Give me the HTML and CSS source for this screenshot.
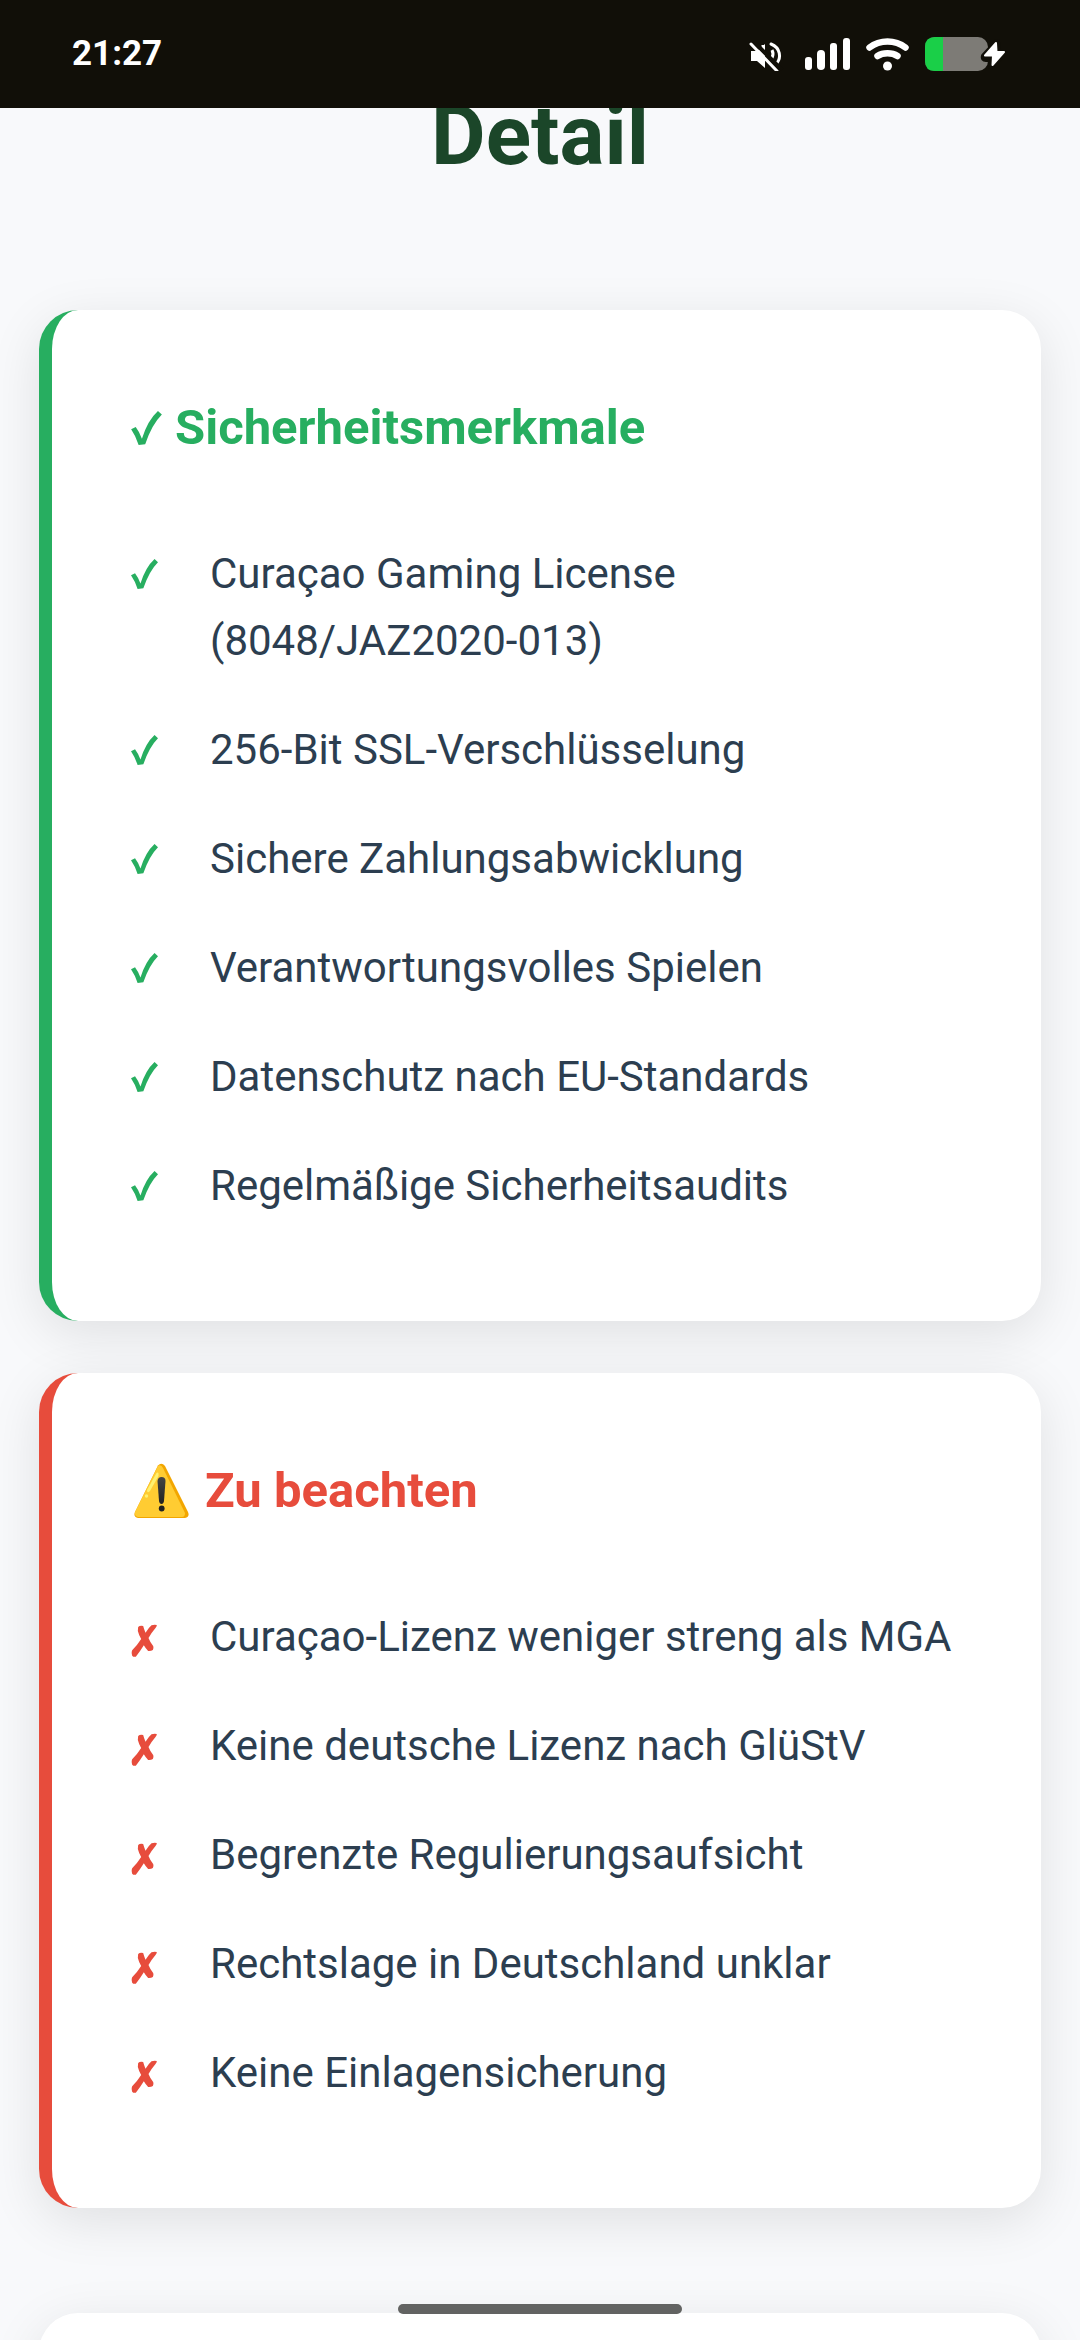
FILE: index.html
```html
<!DOCTYPE html>
<html lang="de">
<head>
<meta charset="utf-8">
<meta name="viewport" content="width=device-width, initial-scale=1">
<title>Sicherheit im Detail</title>
<link rel="stylesheet" href="styles.css">
</head>
<body>
<svg class="defs" width="0" height="0" aria-hidden="true">
  <symbol id="check" viewBox="0 0 94 104">
    <path d="M0 56L14 49Q25 63 33 85Q51 28 82 0L94 11Q63 42 43 102L23 104Q14 76 0 56Z" fill="currentColor"/>
  </symbol>
  <symbol id="cross" viewBox="0 0 78 126">
    <path d="M20 36Q25 31 35 33Q38 44 42 53Q51 39 60 31Q68 28 76 30Q76 34 72 39Q60 53 51 69Q56 82 65 93Q67 99 64 105Q58 109 50 108Q42 100 37 91Q28 106 13 125Q6 127 2 122Q-1 113 2 106Q17 91 29 72Q22 60 19 48Z" fill="currentColor"/>
  </symbol>
</svg>

<header class="status">
  <time class="clock">21:27</time>
  <div class="indicators">
    <svg width="41" height="34" viewBox="0 0 41 34" fill="none">
      <path d="M3 14H9L17 7V31L9 24H3Z" fill="#fff"/>
      <path d="M15 8V17M24 13Q26 17 24 21" stroke="#fff" stroke-width="3"/>
      <path d="M23 7C33 11 33 21 29 26" stroke="#fff" stroke-width="3" stroke-linecap="round"/>
      <path d="M6 5L34 33" stroke="#110f08" stroke-width="4"/>
      <path d="M3 7L29 34" stroke="#fff" stroke-width="3" stroke-linecap="round"/>
    </svg>
    <svg width="45" height="34" viewBox="0 0 45 34" fill="#fff">
      <rect x="0" y="20" width="7" height="13" rx="3"/>
      <rect x="12" y="13" width="8" height="20" rx="4"/>
      <rect x="25" y="6" width="7" height="27" rx="3"/>
      <rect x="38" y="1" width="7" height="32" rx="3"/>
    </svg>
    <svg width="43" height="34" viewBox="0 0 43 34" fill="none" stroke="#fff" stroke-linecap="round">
      <path d="M3.500 10.500C14 2.500 29 2.500 39.500 10.500" stroke-width="6.500"/>
      <path d="M11.500 19C17 15.300 26 15.300 31.500 19" stroke-width="6.500"/>
      <circle cx="21.500" cy="29" r="4.500" fill="#fff" stroke="none"/>
    </svg>
    <svg width="80" height="34" viewBox="0 0 80 34">
      <rect width="63" height="34" rx="10" fill="#7d7b76"/>
      <path d="M10 0H18V34H10Q0 34 0 24V10Q0 0 10 0Z" fill="#1acf48"/>
      <path d="M72 5L59 19Q58 22 61 22H67L66 29L80 15H73Z" fill="#fff" stroke="#110f08" stroke-width="6" stroke-linejoin="round"/>
      <path d="M71 6L60 18.500H68L67.500 28L79 15H71.500Z" fill="#fff" stroke="#fff" stroke-width="2" stroke-linejoin="round"/>
    </svg>
  </div>
</header>

<main class="page">
  <h1 class="title">Detail</h1>

  <section class="card card-good">
    <h2 class="card-title"><svg class="title-check" aria-label="✓"><use href="#check"/></svg>Sicherheitsmerkmale</h2>
    <ul class="list">
      <li><svg class="mark"><use href="#check"/></svg><span>Curaçao Gaming License (8048/JAZ2020-013)</span></li>
      <li><svg class="mark"><use href="#check"/></svg><span>256-Bit SSL-Verschlüsselung</span></li>
      <li><svg class="mark"><use href="#check"/></svg><span>Sichere Zahlungsabwicklung</span></li>
      <li><svg class="mark"><use href="#check"/></svg><span>Verantwortungsvolles Spielen</span></li>
      <li><svg class="mark"><use href="#check"/></svg><span>Datenschutz nach EU-Standards</span></li>
      <li><svg class="mark"><use href="#check"/></svg><span>Regelmäßige Sicherheitsaudits</span></li>
    </ul>
  </section>

  <section class="card card-warn">
    <h2 class="card-title">
      <svg class="title-warn" viewBox="0 0 61 56" aria-label="⚠️">
        <defs>
          <linearGradient id="ink" x1="0" y1="0" x2="0" y2="1"><stop offset="0" stop-color="#454545"/><stop offset="1" stop-color="#212121"/></linearGradient>
        </defs>
        <path d="M27 2.500Q30.500 -1 34 3L57 49Q59 54 54 55H7Q2 54 4 49Z" fill="#f2a600"/>
        <path d="M27 3Q30 1 32 5L54 50Q54 54 51 54H7Q3 53 4 49Z" fill="#ffcc32"/>
        <path d="M25.500 10Q28 8 27.500 13L19 28Q16 31 16 27Z" fill="#fff170"/>
        <circle cx="15.500" cy="33" r="1.700" fill="#fff170"/>
        <path d="M26.500 18Q27 14 30.500 14Q34.500 14 34.500 18L33 38Q32.500 41 30.500 41Q28.500 41 28 38Z" fill="url(#ink)"/>
        <circle cx="30.700" cy="45.500" r="2.900" fill="#212121"/>
      </svg>Zu beachten</h2>
    <ul class="list">
      <li><svg class="mark mark-cross"><use href="#cross"/></svg><span>Curaçao-Lizenz weniger streng als MGA</span></li>
      <li><svg class="mark mark-cross"><use href="#cross"/></svg><span>Keine deutsche Lizenz nach GlüStV</span></li>
      <li><svg class="mark mark-cross"><use href="#cross"/></svg><span>Begrenzte Regulierungsaufsicht</span></li>
      <li><svg class="mark mark-cross"><use href="#cross"/></svg><span>Rechtslage in Deutschland unklar</span></li>
      <li><svg class="mark mark-cross"><use href="#cross"/></svg><span>Keine Einlagensicherung</span></li>
    </ul>
  </section>

  <section class="card card-next"></section>
</main>

<div class="home-bar"></div>
</body>
</html>
```
FILE: styles.css
```css
* {
  box-sizing: border-box;
}

body {
  margin: 0;
  background: #f8f9fb;
  color: #2c3e50;
  font-family: Roboto, "Noto Sans", sans-serif;
  font-size: 42px;
  line-height: 67px;
}

.defs {
  position: absolute;
}

.status {
  position: fixed;
  inset: 0 0 auto;
  z-index: 2;
  display: flex;
  align-items: center;
  justify-content: space-between;
  height: 108px;
  padding: 0 75px 0 72px;
  background: #110f08;
  color: #fff;
}

.clock {
  font-size: 35px;
  font-weight: 700;
  line-height: 42px;
}

.indicators {
  display: flex;
  align-items: center;
  gap: 16px;
}

.page {
  display: flex;
  flex-direction: column;
  height: 100vh;
  padding: 86px 39px 0;
  overflow: hidden;
}

.title {
  margin: 0 0 124px;
  color: #1b4629;
  font-size: 84px;
  font-weight: 700;
  line-height: 100px;
  text-align: center;
}

.card {
  flex: none;
  padding: 79px 79px 81px;
  border-radius: 39px;
  background: #fff;
  box-shadow: 0 13px 52px rgba(0, 0, 0, 0.1);
}

.card-good {
  margin-bottom: 52px;
  border-left: 13px solid #27ae60;
}

.card-warn {
  margin-bottom: 105px;
  border-left: 13px solid #e74c3c;
}

.card-title {
  display: flex;
  align-items: center;
  gap: 13px;
  margin: 0 0 52px;
  font-size: 49px;
  font-weight: 700;
  line-height: 78px;
}

.card-good .card-title,
.card-good .mark {
  color: #27ae60;
}

.card-warn .card-title,
.card-warn .mark {
  color: #e74c3c;
}

.title-check {
  width: 31px;
  height: 34px;
}

.title-warn {
  width: 61px;
  height: 56px;
}

.list {
  margin: 0;
  padding: 0;
  list-style: none;
}

.list li {
  display: grid;
  grid-template-columns: 79px 1fr;
  padding: 21px 0;
}

.mark {
  width: 27px;
  height: 30px;
  margin-top: 19px;
}

.mark-cross {
  height: 42px;
  margin-top: 12px;
}

.home-bar {
  position: fixed;
  bottom: 26px;
  left: 50%;
  z-index: 2;
  width: 284px;
  height: 10px;
  margin-left: -142px;
  border-radius: 5px;
  background: #626362;
}
```
